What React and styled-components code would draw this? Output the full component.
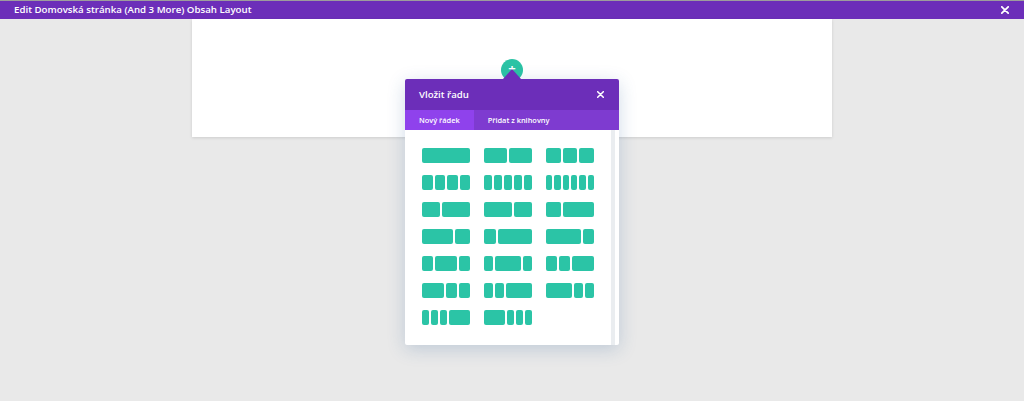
import styled, { createGlobalStyle } from "styled-components";

const GlobalStyle = createGlobalStyle`
  html, body {
    margin: 0;
    padding: 0;
    background: #e9e9e9;
    font-family: "Open Sans", "Liberation Sans", sans-serif;
  }
`;

const layouts = [
  [[1], [1, 1], [1, 1, 1]],
  [[1, 1, 1, 1], [1, 1, 1, 1, 1], [1, 1, 1, 1, 1, 1]],
  [[2, 3], [3, 2], [1, 2]],
  [[2, 1], [1, 3], [3, 1]],
  [[1, 2, 1], [1, 3, 1], [1, 1, 2]],
  [[2, 1, 1], [1, 1, 3], [3, 1, 1]],
  [[1, 1, 1, 3], [3, 1, 1, 1]],
];

const App = () => {
  return (
    <>
      <GlobalStyle />
      <TopBar>
        <span>Edit Domovská stránka (And 3 More) Obsah Layout</span>
        <CloseIcon size={8} />
      </TopBar>
      <Page>
        <Card>
          <AddButton>+</AddButton>
          <Modal>
            <ModalHeader>
              <h3>Vložit řadu</h3>
              <CloseIcon size={7} />
            </ModalHeader>
            <Tabs>
              <Tab $active>Nový řádek</Tab>
              <Tab>Přidat z knihovny</Tab>
            </Tabs>
            <ModalBody>
              <LayoutGrid>
                {layouts.flat().map((cols, i) => (
                  <LayoutRow key={i}>
                    {cols.map((c, j) => (
                      <Column key={j} $grow={c} />
                    ))}
                  </LayoutRow>
                ))}
              </LayoutGrid>
              <ScrollTrack />
            </ModalBody>
          </Modal>
        </Card>
      </Page>
    </>
  );
};

const CloseIcon = ({ size }) => (
  <svg width={size} height={size} viewBox="0 0 10 10">
    <path
      d="M1 1 L9 9 M9 1 L1 9"
      stroke="#fff"
      strokeWidth="2.2"
      strokeLinecap="round"
    />
  </svg>
);

const TopBar = styled.div`
  display: flex;
  align-items: center;
  justify-content: space-between;
  height: 18px;
  padding: 0 15px 0 14px;
  border-top: 1px solid #9d9d9d;
  background: #6c2eb9;
  color: #fff;
  font-size: 9.7px;
  font-weight: 600;
  span {
    line-height: 18px;
  }
`;

const Page = styled.div`
  min-height: calc(100vh - 19px);
`;

const Card = styled.div`
  position: relative;
  width: 640px;
  height: 118px;
  margin: 0 auto;
  background: #fff;
  box-shadow: 0 1px 3px rgba(0, 0, 0, 0.12);
`;

const AddButton = styled.div`
  position: absolute;
  top: 40px;
  left: 50%;
  width: 22px;
  height: 22px;
  margin-left: -11px;
  border-radius: 50%;
  background: #2bc3a5;
  color: #fff;
  font-size: 13px;
  font-weight: 700;
  line-height: 19px;
  text-align: center;
`;

const Modal = styled.div`
  position: absolute;
  top: 60px;
  left: 50%;
  width: 214px;
  transform: translateX(-50%);
  background: #fff;
  border-radius: 2px;
  box-shadow: 0 4px 18px rgba(40, 90, 150, 0.22);
  z-index: 2;
  &::before {
    content: "";
    position: absolute;
    top: -10px;
    left: 50%;
    margin-left: -9px;
    border-left: 9px solid transparent;
    border-right: 9px solid transparent;
    border-bottom: 10px solid #6c2eb9;
  }
`;

const ModalHeader = styled.div`
  display: flex;
  align-items: center;
  justify-content: space-between;
  height: 31px;
  padding: 0 15px 0 14px;
  background: #6c2eb9;
  border-radius: 2px 2px 0 0;
  color: #fff;
  h3 {
    margin: 0;
    font-size: 9.6px;
    font-weight: 600;
  }
`;

const Tabs = styled.div`
  display: flex;
  height: 20px;
  background: #7e3bd0;
`;

const Tab = styled.div`
  display: flex;
  align-items: center;
  padding: 0 14px;
  background: ${(p) => (p.$active ? "#8f42ec" : "transparent")};
  color: #fff;
  font-size: 7.4px;
  font-weight: 600;
`;

const ModalBody = styled.div`
  display: flex;
  height: 215px;
`;

const LayoutGrid = styled.div`
  flex: 1;
  display: grid;
  grid-template-columns: repeat(3, 48px);
  grid-auto-rows: 15px;
  column-gap: 14px;
  row-gap: 12px;
  align-content: start;
  padding: 18px 0 0 17px;
`;

const LayoutRow = styled.div`
  display: flex;
  gap: 2px;
`;

const Column = styled.div`
  flex: ${(p) => p.$grow} 1 0;
  background: #2bc4a6;
  border-radius: 2px;
`;

const ScrollTrack = styled.div`
  width: 4px;
  margin-right: 4px;
  background: #eaedf0;
`;

export default App;
